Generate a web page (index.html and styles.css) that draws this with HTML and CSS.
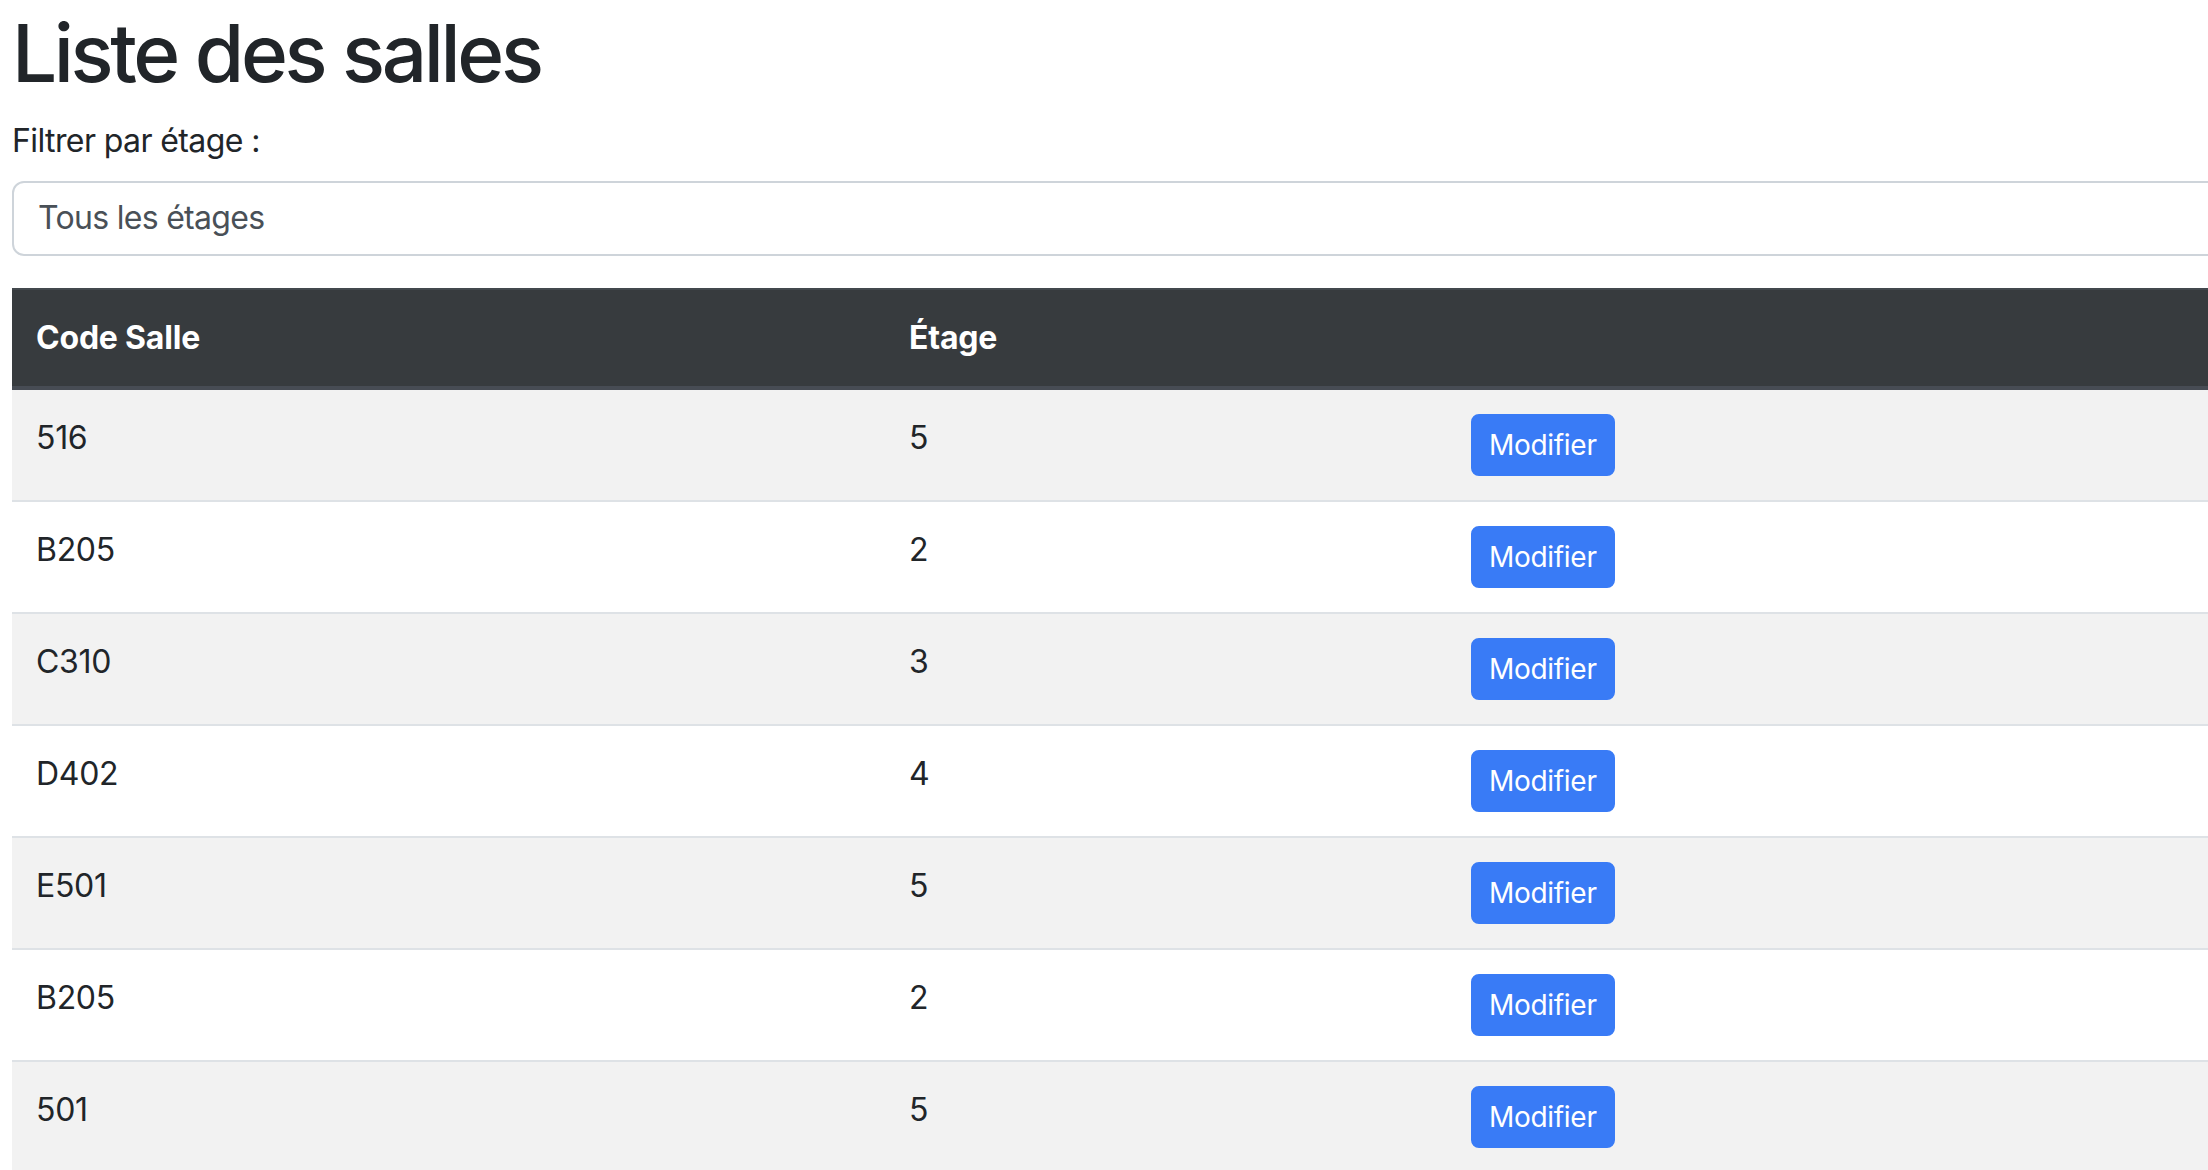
FILE: index.html
```html
<!DOCTYPE html>
<html lang="fr">
<head>
<meta charset="utf-8">
<title>Liste des salles</title>
<link rel="stylesheet" href="styles.css">
</head>
<body>
<div class="page">
  <h1 class="title">Liste des salles</h1>
  <label class="filter-label" for="etage">Filtrer par étage :</label>
  <div class="select">Tous les étages</div>
  <table class="rooms">
    <colgroup>
      <col class="col-code">
      <col class="col-floor">
      <col class="col-actions">
    </colgroup>
    <thead>
      <tr><th>Code Salle</th><th>Étage</th><th></th></tr>
    </thead>
    <tbody>
      <tr><td>516</td><td>5</td><td><button class="btn">Modifier</button></td></tr>
      <tr><td>B205</td><td>2</td><td><button class="btn">Modifier</button></td></tr>
      <tr><td>C310</td><td>3</td><td><button class="btn">Modifier</button></td></tr>
      <tr><td>D402</td><td>4</td><td><button class="btn">Modifier</button></td></tr>
      <tr><td>E501</td><td>5</td><td><button class="btn">Modifier</button></td></tr>
      <tr><td>B205</td><td>2</td><td><button class="btn">Modifier</button></td></tr>
      <tr><td>501</td><td>5</td><td><button class="btn">Modifier</button></td></tr>
    </tbody>
  </table>
</div>
</body>
</html>
```
FILE: styles.css
```css
html, body {
  margin: 0;
  padding: 0;
  overflow: hidden;
  background: #ffffff;
}
body {
  font-family: Inter, "Liberation Sans", Arial, sans-serif;
  font-size: 32px;
  line-height: 48px;
  color: #212529;
}
.page {
  width: 2700px;
  padding: 5px 0 0 12px;
}
.title {
  margin: 0 0 16px 0;
  font-size: 80px;
  line-height: 96px;
  font-weight: 500;
  letter-spacing: -3.4px;
  color: #212529;
}
.filter-label {
  display: block;
  margin-bottom: 16px;
  font-size: 32px;
  line-height: 48px;
  letter-spacing: -0.6px;
}
.select {
  height: 75px;
  box-sizing: border-box;
  border: 2px solid #ced4da;
  border-radius: 12px;
  padding: 11px 24px;
  font-size: 32px;
  line-height: 48px;
  color: #495057;
  letter-spacing: -0.7px;
  margin-bottom: 32px;
}
.rooms {
  width: 2650px;
  border-collapse: collapse;
  table-layout: fixed;
}
.col-code { width: 873px; }
.col-floor { width: 562px; }
.rooms th, .rooms td {
  padding: 24px;
  text-align: left;
  vertical-align: top;
}
.rooms td {
  letter-spacing: -0.3px;
}
.rooms thead tr {
  background: #373b3e;
  color: #ffffff;
  border-top: 2px solid #43484d;
  border-bottom: 4px solid #474c54;
}
.rooms th {
  font-weight: 700;
  letter-spacing: -0.2px;
}
.rooms tbody tr {
  border-bottom: 2px solid #dee2e6;
}
.rooms tbody tr:nth-child(odd) {
  background: #f2f2f2;
}
.btn {
  font-family: Inter, "Liberation Sans", Arial, sans-serif;
  font-size: 28px;
  line-height: 42px;
  letter-spacing: -0.3px;
  padding: 8px 16px;
  border: 2px solid #397bf6;
  border-radius: 8px;
  background: #397bf6;
  color: #ffffff;
  margin: 0;
  display: inline-block;
}
```
